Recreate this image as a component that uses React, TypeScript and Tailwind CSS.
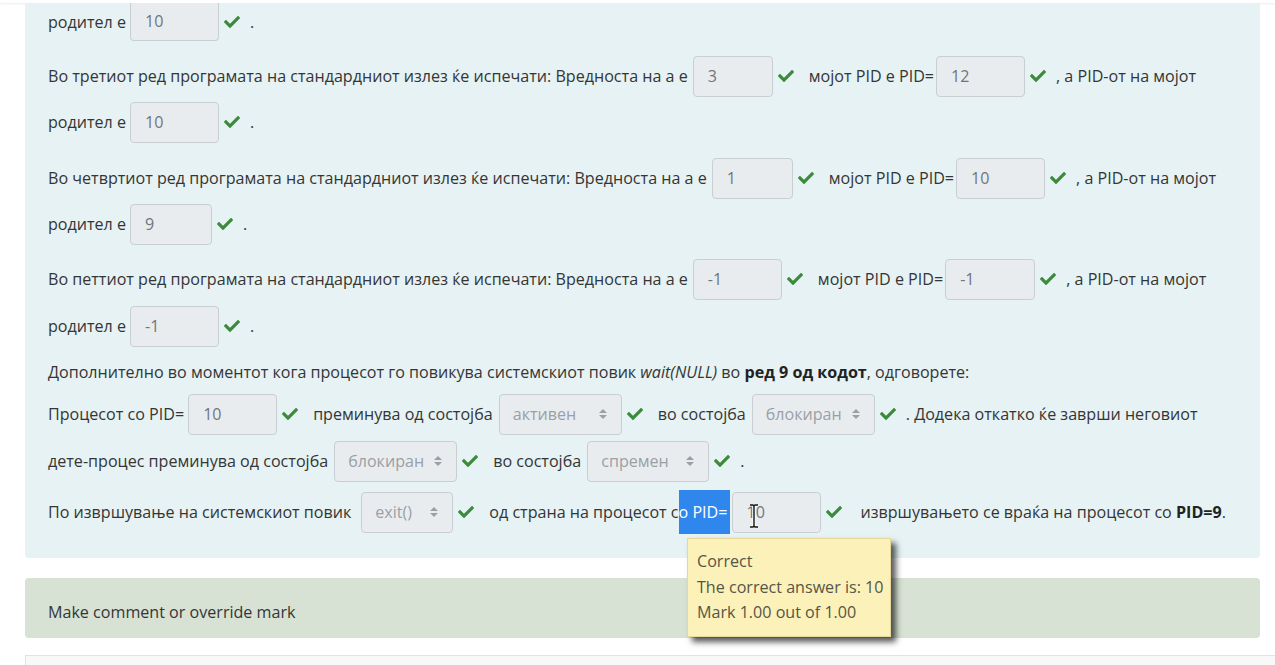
import { FaCheck } from "react-icons/fa";

function Check({ className = "" }: { className?: string }) {
    return <FaCheck className={"ml-[5px] shrink-0 text-[#3c8a3c] " + className} size={16} />;
}

function Box({ value, w, className = "" }: { value: string; w: string; className?: string }) {
    return (
        <span className={"inline-flex h-[41px] shrink-0 items-center rounded-[4px] border border-[#c9ced3] bg-[#e9ecef] pl-[14px] text-[#70767b] " + w + " " + className}>
            {value}
        </span>
    );
}

function Sel({ value, w }: { value: string; w: string }) {
    return (
        <span className={"ml-[6px] inline-flex h-[41px] shrink-0 items-center justify-between rounded-[4px] border border-[#c9ced3] bg-[#e9ecef] pl-[13px] pr-[14px] text-[#9aa0a5] " + w}>
            {value}
            <svg width="8" height="10" viewBox="0 0 4 5" className="ml-[6px]">
                <path d="M2 0L0 2h4zm0 5L0 3h4z" fill="#9aa0a5" />
            </svg>
        </span>
    );
}

function Parent({ value, w }: { value: string; w: string }) {
    return (
        <>
            <span>родител е</span>
            <Box value={value} w={w} className="ml-[4px]" />
            <Check />
            <span className="ml-[10px]">.</span>
        </>
    );
}

function Line({ intro, a, aw, pid, pw }: { intro: string; a: string; aw: string; pid: string; pw: string }) {
    return (
        <>
            <span>{intro}</span>
            <Box value={a} w={aw} className="ml-[5px]" />
            <Check />
            <span className="ml-[15px]">мојот PID е PID=</span>
            <Box value={pid} w={pw} className="ml-[2px]" />
            <Check />
            <span className="ml-[10px]">, а PID-от на мојот</span>
        </>
    );
}

export default function App() {
    const row = "flex h-[42px] items-center whitespace-nowrap";
    return (
        <div className="relative h-[665px] w-[1275px] overflow-hidden bg-white text-[16.1px] text-[#353535]" style={{ fontFamily: '"Open Sans", "Noto Sans", sans-serif' }}>
            <div className="h-[3px] bg-white shadow-[0_1px_2px_rgba(0,0,0,0.08)]" />

            <div className="ml-[25px] w-[1235px] rounded-b-[4px] bg-[#e6f2f3] pb-[25px] pl-[23px]">
                <div className="flex h-[38px] items-center whitespace-nowrap">
                    <span>родител е</span>
                    <span className="ml-[4px] inline-flex h-[38px] w-[89px] items-center rounded-b-[4px] border border-t-0 border-[#c9ced3] bg-[#e9ecef] pl-[14px] text-[#70767b]">10</span>
                    <Check />
                    <span className="ml-[10px]">.</span>
                </div>

                <div className={row + " mt-[14px]"}>
                    <Line intro="Во третиот ред програмата на стандардниот излез ќе испечати: Вредноста на а е" a="3" aw="w-[80px]" pid="12" pw="w-[89px]" />
                </div>
                <div className={row + " mt-[4px]"}>
                    <Parent value="10" w="w-[89px]" />
                </div>

                <div className={row + " mt-[14px]"}>
                    <Line intro="Во четвртиот ред програмата на стандардниот излез ќе испечати: Вредноста на а е" a="1" aw="w-[81px]" pid="10" pw="w-[89px]" />
                </div>
                <div className={row + " mt-[4px]"}>
                    <Parent value="9" w="w-[82px]" />
                </div>

                <div className={row + " mt-[13px]"}>
                    <Line intro="Во петтиот ред програмата на стандардниот излез ќе испечати: Вредноста на а е" a="-1" aw="w-[89px]" pid="-1" pw="w-[90px]" />
                </div>
                <div className={row + " mt-[5px]"}>
                    <Parent value="-1" w="w-[89px]" />
                </div>

                <div className={row + " mt-[4px]"}>
                    <span>
                        Дополнително во моментот кога процесот го повикува системскиот повик <i>wait(NULL)</i> во <b className="text-[#222]">ред 9 од кодот</b>, одговорете:
                    </span>
                </div>

                <div className={row}>
                    <span>Процесот со PID=</span>
                    <Box value="10" w="w-[89px]" className="ml-[4px]" />
                    <Check />
                    <span className="ml-[15px]">преминува од состојба</span>
                    <Sel value="активен" w="w-[123px]" />
                    <Check />
                    <span className="ml-[15px]">во состојба</span>
                    <Sel value="блокиран" w="w-[123px]" />
                    <Check />
                    <span className="ml-[10px]">. Додека откатко ќе заврши неговиот</span>
                </div>

                <div className={row + " mt-[5px]"}>
                    <span>дете-процес преминува од состојба</span>
                    <Sel value="блокиран" w="w-[123px]" />
                    <Check />
                    <span className="ml-[15px]">во состојба</span>
                    <Sel value="спремен" w="w-[122px]" />
                    <Check />
                    <span className="ml-[10px]">.</span>
                </div>

                <div className={row + " mt-[9px]"}>
                    <span>По извршување на системскиот повик</span>
                    <span className="ml-[4px]" />
                    <Sel value="exit()" w="w-[92px]" />
                    <Check />
                    <span className="ml-[15px]">од страна на процесот с</span>
                    <span className="flex h-[44px] items-center bg-[#2f86ec] pr-[2px] text-white">о PID=</span>
                    <span className="relative ml-[2px]">
                        <Box value="10" w="w-[89px]" />
                        <svg width="12" height="24" viewBox="0 0 12 24" className="absolute left-[16px] top-[12px]">
                            <path d="M2 1h3l1 1 1-1h3M6 2v20M2 23h3l1-1 1 1h3" stroke="#fff" strokeWidth="3" fill="none" />
                            <path d="M2 1h3l1 1 1-1h3M6 2v20M2 23h3l1-1 1 1h3" stroke="#111" strokeWidth="1.4" fill="none" />
                        </svg>
                    </span>
                    <Check />
                    <span className="ml-[19px]">
                        извршувањето се враќа на процесот со <b className="text-[#222]">PID=9</b>.
                    </span>
                </div>
            </div>

            <div className="ml-[25px] mt-[20px] flex h-[60px] w-[1235px] items-center rounded-[4px] bg-[#d7e2d4] pl-[23px] pt-[8px]">
                Make comment or override mark
            </div>

            <div className="ml-[25px] mt-[17px] h-[20px] border-l border-t border-[#e2e2e2] bg-[#f8f8f8]" />

            <div className="absolute left-[687px] top-[538px] w-[204px] border border-[#e6d89a] bg-[#fcf1b8] pb-[10px] pl-[9px] pt-[10px] text-[#55554a] leading-[25.5px] shadow-[5px_5px_6px_rgba(0,0,0,0.65)]">
                <div>Correct</div>
                <div>The correct answer is: 10</div>
                <div>Mark 1.00 out of 1.00</div>
            </div>
        </div>
    );
}
